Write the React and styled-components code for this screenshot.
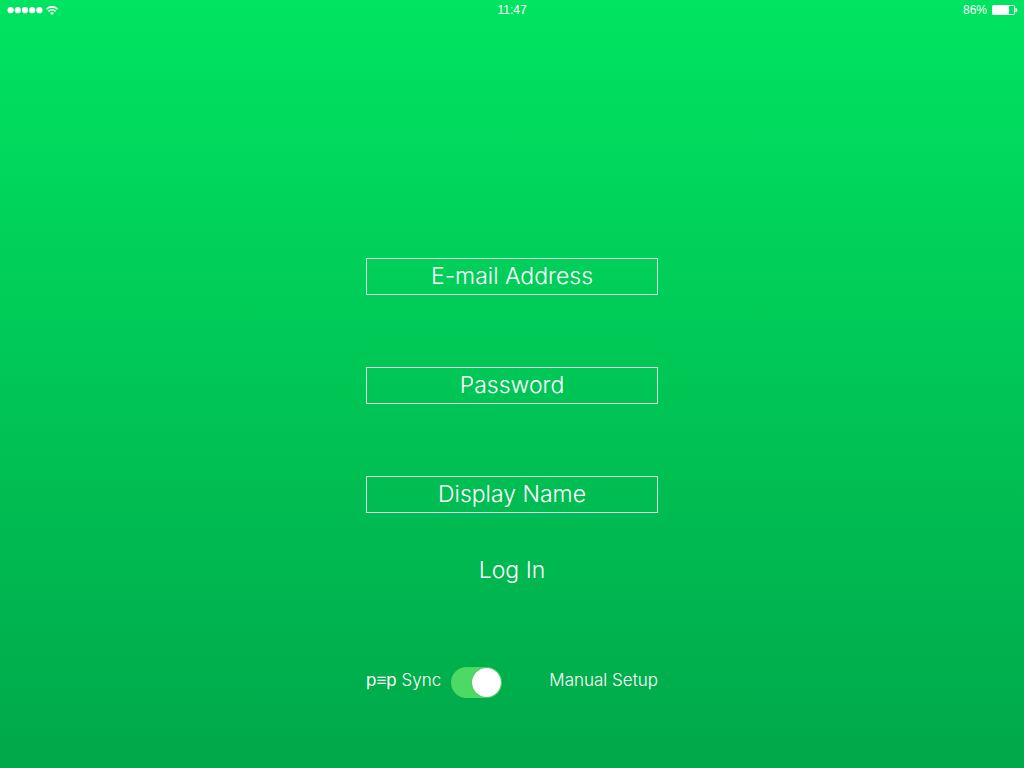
import React, { useState } from "react";
import styled, { createGlobalStyle } from "styled-components";

const GlobalStyle = createGlobalStyle`
  *, *::before, *::after { box-sizing: border-box; }
  body { margin: 0; }
`;

const Screen = styled.div`
  min-height: 100vh;
  display: flex;
  flex-direction: column;
  color: #fff;
  font-family: Inter, "Liberation Sans", sans-serif;
  font-weight: 300;
  background: linear-gradient(#00e461, #00a84a);
`;

const StatusBar = styled.header`
  display: grid;
  grid-template-columns: 1fr auto 1fr;
  align-items: center;
  height: 20px;
  padding: 0 6px;
  font-family: "Liberation Sans", sans-serif;
  font-size: 12px;
  font-weight: 400;
  line-height: 20px;
`;

const StatusGroup = styled.div`
  display: flex;
  align-items: center;
  justify-content: ${({ $end }) => ($end ? "flex-end" : "flex-start")};
  gap: ${({ $end }) => ($end ? "5px" : "3px")};
`;

const Main = styled.main`
  flex: 1;
  display: flex;
  flex-direction: column;
  align-items: center;
  padding: 238px 16px 64px;
`;

const LoginForm = styled.form`
  display: flex;
  flex-direction: column;
  width: 100%;
  max-width: 292px;
`;

const Fields = styled.div`
  display: flex;
  flex-direction: column;
  gap: 72px;
`;

const Field = styled.input`
  width: 100%;
  height: 37px;
  padding: 0 8px 2px;
  border: 1px solid rgba(255, 255, 255, 0.85);
  border-radius: 0;
  outline: none;
  background: transparent;
  color: #fff;
  font: inherit;
  font-size: 23px;
  text-align: center;

  &::placeholder { color: #fff; opacity: 1; }
  &:focus-visible { border-color: #fff; }
`;

const LoginButton = styled.button`
  align-self: center;
  margin-top: 40px;
  padding: 0 8px;
  border: 0;
  background: none;
  color: inherit;
  font: inherit;
  font-size: 23px;
  line-height: 34px;
  cursor: pointer;
`;

const Options = styled.div`
  display: flex;
  align-items: center;
  justify-content: space-between;
  margin-top: 79px;
  font-size: 17px;
  line-height: 28px;
  white-space: nowrap;
`;

const SyncLabel = styled.label`
  display: flex;
  align-items: center;
  gap: 10px;
`;

const OptionText = styled.span`
  padding-bottom: 4px;
`;

const Brand = styled.span`
  font-weight: 400;
`;

const Switch = styled.input`
  appearance: none;
  display: flex;
  align-items: center;
  justify-content: ${({ checked }) => (checked ? "flex-end" : "flex-start")};
  flex: none;
  width: 51px;
  height: 31px;
  margin: 0;
  padding: 0 1px;
  border-radius: 16px;
  background: ${({ checked }) => (checked ? "#4cd964" : "#3a9f5c")};
  cursor: pointer;

  &::before {
    content: "";
    width: 29px;
    height: 29px;
    border-radius: 50%;
    background: #fff;
    box-shadow: 0 0 1px rgba(0, 60, 20, 0.4);
  }
`;

const SetupLink = styled.a`
  padding-bottom: 4px;
  color: inherit;
  text-decoration: none;
`;

const Signal = () => (
  <svg width="37" height="7" viewBox="0 0 37 7" fill="#fff" aria-hidden="true">
    {[4.6, 11.8, 19, 26.2, 33.4].map((cx) => (
      <circle key={cx} cx={cx} cy="3.2" r="3.1" />
    ))}
  </svg>
);

const Wifi = () => (
  <svg width="12" height="9" viewBox="0 0 12 9" fill="none" stroke="#fff" strokeWidth="1.6" aria-hidden="true">
    <path d="M0.5 3.2C3.6 0.1 8.4 0.1 11.5 3.2" />
    <path d="M2.5 5.3C4.5 3.4 7.5 3.4 9.5 5.3" />
    <path d="M4.1 6.9C5.2 5.9 6.8 5.9 7.9 6.9L6 8.9Z" fill="#fff" stroke="none" />
  </svg>
);

const Battery = () => (
  <svg width="26" height="10" viewBox="0 0 26 10" aria-hidden="true">
    <rect x="0.5" y="0.5" width="22" height="9" rx="0.8" fill="none" stroke="#fff" />
    <rect x="1" y="1" width="16" height="8" fill="#fff" />
    <path d="M23.5 2.6C26 3.4 26 6.6 23.5 7.4Z" fill="#fff" />
  </svg>
);

const FIELDS = [
  { name: "email", type: "email", label: "E-mail Address" },
  { name: "password", type: "password", label: "Password" },
  { name: "displayName", type: "text", label: "Display Name" },
];

export default function App() {
  const [sync, setSync] = useState(true);
  return (
    <Screen>
      <GlobalStyle />
      <StatusBar>
        <StatusGroup>
          <Signal />
          <Wifi />
        </StatusGroup>
        <time>11:47</time>
        <StatusGroup $end>
          <span>86%</span>
          <Battery />
        </StatusGroup>
      </StatusBar>
      <Main>
        <LoginForm onSubmit={(e) => e.preventDefault()}>
          <Fields>
            {FIELDS.map(({ name, type, label }) => (
              <Field key={name} name={name} type={type} placeholder={label} aria-label={label} />
            ))}
          </Fields>
          <LoginButton type="submit">Log In</LoginButton>
          <Options>
            <SyncLabel>
              <OptionText>
                <Brand>p≡p</Brand> Sync
              </OptionText>
              <Switch
                type="checkbox"
                role="switch"
                checked={sync}
                onChange={(e) => setSync(e.target.checked)}
              />
            </SyncLabel>
            <SetupLink href="#manual-setup">Manual Setup</SetupLink>
          </Options>
        </LoginForm>
      </Main>
    </Screen>
  );
}
